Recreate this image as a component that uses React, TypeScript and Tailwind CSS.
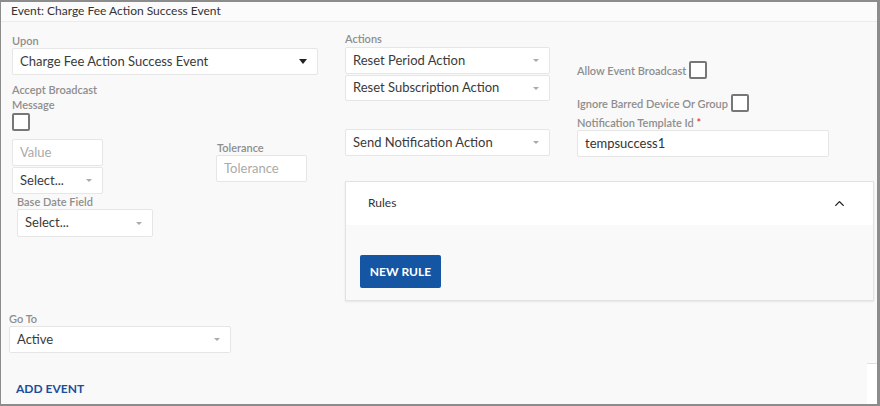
import { ChevronUp } from "lucide-react";

const font = "font-['Lato','Liberation_Sans',sans-serif]";

const Label = ({ children, className = "" }: { children: React.ReactNode; className?: string }) => (
  <div className={`text-[11px] font-semibold leading-[15px] text-[#8e8e8e] ${className}`}>{children}</div>
);

const Caret = ({ dark }: { dark?: boolean }) =>
  dark ? (
    <span className="h-0 w-0 border-x-[4px] border-t-[5px] border-x-transparent border-t-[#222]" />
  ) : (
    <span className="h-0 w-0 border-x-[3px] border-t-[3px] border-x-transparent border-t-[#aaa]" />
  );

const Select = ({
  value,
  className = "",
  dark,
}: {
  value: string;
  className?: string;
  dark?: boolean;
}) => (
  <div
    className={`flex items-center justify-between rounded-[2px] border border-[#e6e6e6] bg-white pl-[7px] pr-[10px] text-[13px] text-[#3a3a3a] ${className}`}
  >
    <span>{value}</span>
    <Caret dark={dark} />
  </div>
);

const Input = ({
  value,
  placeholder,
  className = "",
}: {
  value?: string;
  placeholder?: string;
  className?: string;
}) => (
  <div
    className={`flex items-center rounded-[2px] border border-[#e6e6e6] bg-white pl-[7px] text-[13px] ${
      value ? "text-[#333]" : "text-[#aaa]"
    } ${className}`}
  >
    {value ?? placeholder}
  </div>
);

const Checkbox = ({ className = "" }: { className?: string }) => (
  <div className={`h-[18px] w-[18px] rounded-[2px] border-2 border-[#777] bg-white ${className}`} />
);

export default function App() {
  return (
    <div
      className={`${font} relative h-[406px] w-[880px] overflow-hidden border-b-2 border-l border-r-[3px] border-t-2 border-[#8c8c8c] bg-[#f9f9f9]`}
    >
      <div className="h-[20px] border-b border-[#ececec] bg-[#fbfbfb] pl-[10px] text-[12px] leading-[18px] text-[#333]">
        Event: Charge Fee Action Success Event
      </div>

      <div className="flex h-[288px]">
        {/* left column */}
        <div className="w-[344px] pl-[11px] pt-[11px]">
          <Label>Upon</Label>
          <Select value="Charge Fee Action Success Event" className="h-[27px] w-[306px]" dark />
          <Label className="mt-[7px] w-[95px]">Accept Broadcast Message</Label>
          <Checkbox className="mt-[1px]" />
          <div className="flex">
            <div className="w-[91px]">
              <Input placeholder="Value" className="mt-[8px] h-[27px]" />
              <Select value="Select..." className="mt-[1px] h-[27px]" />
            </div>
            <div className="ml-[113px] pt-[9px]">
              <Label className="pl-[1px]">Tolerance</Label>
              <Input placeholder="Tolerance" className="h-[27px] w-[91px]" />
            </div>
          </div>
          <div className="pl-[5px]">
            <Label>Base Date Field</Label>
            <Select value="Select..." className="h-[28px] w-[136px]" />
          </div>
        </div>

        {/* right region */}
        <div className="flex w-[529px] flex-col pt-[9px]">
          <div className="flex">
            <div className="w-[232px]">
              <Label>Actions</Label>
              <Select value="Reset Period Action" className="mt-[1px] h-[27px] w-[205px]" />
              <Select value="Reset Subscription Action" className="mt-[1px] h-[26px] w-[205px]" />
              <Select value="Send Notification Action" className="mt-[28px] h-[27px] w-[205px]" />
            </div>
            <div className="pt-[30px]">
              <div className="flex items-center gap-[3px]">
                <Label>Allow Event Broadcast</Label>
                <Checkbox />
              </div>
              <div className="mt-[15px] flex items-center gap-[3px]">
                <Label>Ignore Barred Device Or Group</Label>
                <Checkbox />
              </div>
              <Label className="mt-[3px]">
                Notification Template Id <span className="text-[#d33]">*</span>
              </Label>
              <Input value="tempsuccess1" className="h-[27px] w-[252px]" />
            </div>
          </div>

          <div className="mt-[24px] border border-[#e2e2e2] bg-[#f9f9f9] shadow-[0_1px_2px_rgba(0,0,0,0.08)]">
            <div className="flex h-[43px] items-center justify-between bg-white pl-[22px] pr-[26px] text-[12px] text-[#333]">
              <span className="-mt-[2px]">Rules</span>
              <ChevronUp size={15} strokeWidth={2.25} className="text-[#222]" />
            </div>
            <div className="px-[14px] pb-[12px] pt-[30px]">
              <button className="h-[33px] w-[81px] rounded-[2px] bg-[#1456a3] text-[12px] font-bold text-white">
                NEW RULE
              </button>
            </div>
          </div>
        </div>
      </div>

      <div className="pl-[8px] pt-[1px]">
        <Label>Go To</Label>
        <Select value="Active" className="h-[27px] w-[222px]" />
      </div>
      <div className="pl-[15px] pt-[27px] text-[12px] font-bold text-[#1a4f9c]">ADD EVENT</div>

      <div className="absolute bottom-0 right-0 h-[41px] w-[10px] border-t border-[#e0e0e0] bg-white" />
    </div>
  );
}
